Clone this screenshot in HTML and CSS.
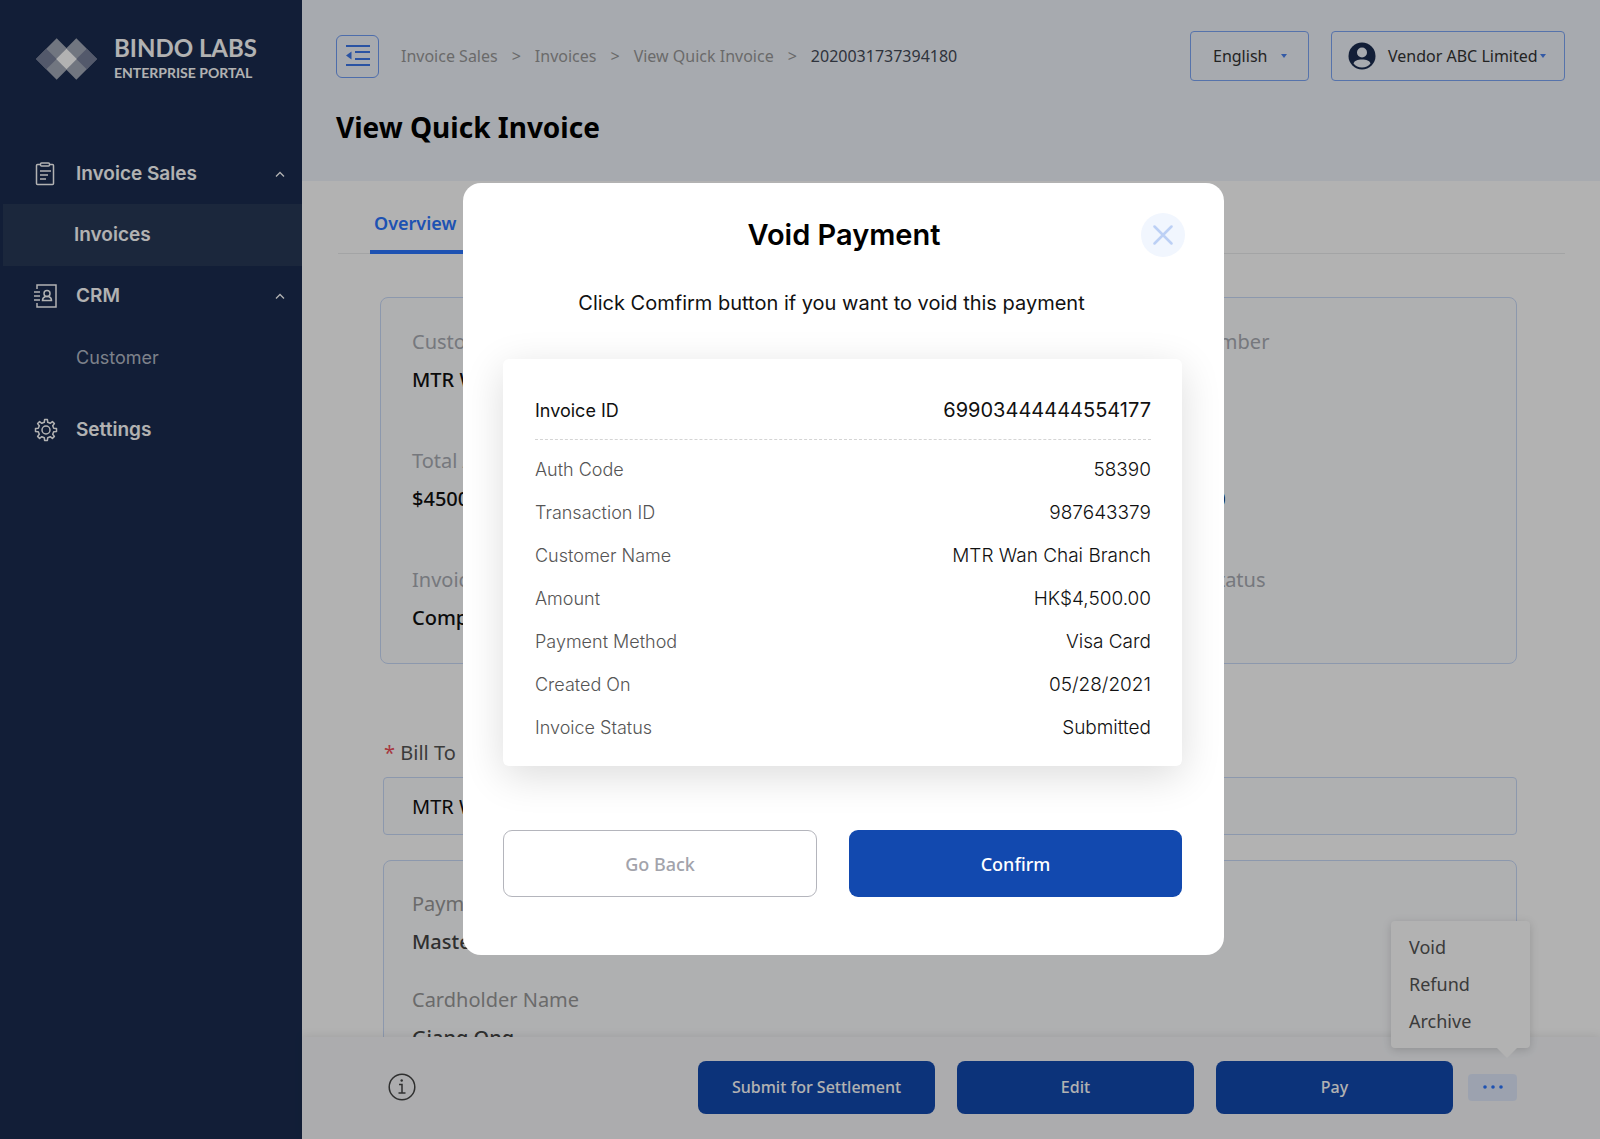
FILE: index.html
```html
<!DOCTYPE html>
<html lang="en">
<head>
<meta charset="utf-8">
<meta name="viewport" content="width=device-width, initial-scale=1">
<title>View Quick Invoice - Bindo Labs Enterprise Portal</title>
<link rel="stylesheet" href="styles.css">
</head>
<body>
<div class="app">
  <aside class="sidebar">
    <a class="brand" href="#">
      <svg class="brand-mark" width="61" height="42" viewBox="0 0 62 42" aria-hidden="true">
        <path d="M21 0 42 21 21 42 0 21z" fill="#a3aab8"/>
        <path d="M41 0 62 21 41 42 20 21z" fill="#a3aab8"/>
        <path d="M10.500 10.500 21 21 10.500 31.500 0 21z" fill="#78809a"/>
        <path d="M51.500 10.500 62 21 51.500 31.500 41 21z" fill="#78809a"/>
        <path d="M21 21 26 16 31 21 26 26zM31 21 36 16 41 21 36 26z" fill="#78809a"/>
        <path d="M31 10.500 41.500 21 31 31.500 20.500 21z" fill="#fff"/>
      </svg>
      <span class="brand-text"><span class="brand-name">BINDO LABS</span><span class="brand-sub">ENTERPRISE PORTAL</span></span>
    </a>
    <nav class="nav" aria-label="Main">
      <a class="nav-item" href="#">
        <svg class="nav-icon" width="24" height="24" viewBox="0 0 24 24" fill="none" stroke="currentColor" stroke-width="1.500" aria-hidden="true">
          <rect x="2.500" y="2.500" width="17" height="20" rx="1"/><rect x="6.500" y="1" width="9" height="3" rx="1" fill="#1a2c50"/><path d="M6 9h11M6 13h8M6 17h6"/>
        </svg>
        <span>Invoice Sales</span>
        <svg class="chevron" width="10" height="6" viewBox="0 0 10 6" fill="none" stroke="currentColor" stroke-width="1.300" aria-hidden="true"><path d="M1 5.500 5 1.500 9 5.500"/></svg>
      </a>
      <a class="nav-sub active" href="#" aria-current="page">Invoices</a>
      <a class="nav-item" href="#">
        <svg class="nav-icon" width="24" height="24" viewBox="0 0 24 24" fill="none" stroke="currentColor" stroke-width="1.500" aria-hidden="true">
          <path d="M3 5V1h19v22H3v-4M0 8h6M0 12h6M0 16h6"/><circle cx="13" cy="9.500" r="3"/><path d="M8.500 16.500c0-2 1.500-3.500 3-4h3c1.500.5 3 2 3 4z"/>
        </svg>
        <span>CRM</span>
        <svg class="chevron" width="10" height="6" viewBox="0 0 10 6" fill="none" stroke="currentColor" stroke-width="1.300" aria-hidden="true"><path d="M1 5.500 5 1.500 9 5.500"/></svg>
      </a>
      <a class="nav-sub" href="#">Customer</a>
      <a class="nav-item settings" href="#">
        <svg class="nav-icon" width="24" height="24" viewBox="0 0 24 24" fill="none" stroke="currentColor" stroke-width="1.500" stroke-linejoin="round" aria-hidden="true">
          <circle cx="12" cy="12" r="4"/>
          <path d="M10.300 4.300 10.600 1.500h2.800l.3 2.800 2.500 1 2.200-1.700 2 2-1.700 2.200 1 2.500 2.800.3v2.800l-2.800.3-1 2.500 1.700 2.200-2 2-2.200-1.700-2.500 1-.3 2.800h-2.800l-.3-2.800-2.500-1-2.200 1.700-2-2 1.700-2.200-1-2.500-2.800-.3v-2.800l2.800-.3 1-2.500-1.700-2.200 2-2 2.200 1.700z"/>
        </svg>
        <span>Settings</span>
      </a>
    </nav>
  </aside>

  <main class="main">
    <header class="topbar">
      <div class="topbar-row">
        <button class="toggle" type="button" aria-label="Collapse menu">
          <svg width="24" height="22" viewBox="0 0 24 22" fill="currentColor" aria-hidden="true"><path d="M0 0h24v2H0zM9 6h15v2H9zM9 13h15v2H9zM0 19h24v2H0zM0 10.500 5.500 6.500v8z"/></svg>
        </button>
        <nav class="crumbs" aria-label="Breadcrumb">
          <a href="#">Invoice Sales</a><span>&gt;</span><a href="#">Invoices</a><span>&gt;</span><a href="#">View Quick Invoice</a><span>&gt;</span><span class="current" aria-current="page">2020031737394180</span>
        </nav>
        <div class="topbar-actions">
          <div class="pill language">
            <select aria-label="Language"><option>English</option></select>
            <svg class="caret" width="6" height="4" viewBox="0 0 6 4" aria-hidden="true"><path d="M0 0h6L3 4z" fill="currentColor"/></svg>
          </div>
          <button class="pill account" type="button">
            <svg width="28" height="28" viewBox="0 0 28 28" aria-hidden="true"><circle cx="14" cy="14" r="13.500" fill="#1a2c50"/><circle cx="14" cy="10.500" r="5" fill="#f0f4fb"/><path d="M5.500 21.500c1-3 4-4 8.500-4s7.500 1 8.500 4c-2 2.500-5 4-8.500 4s-6.500-1.500-8.500-4z" fill="#f0f4fb"/></svg>
            <span>Vendor ABC Limited</span>
            <svg class="caret" width="6" height="4" viewBox="0 0 6 4" aria-hidden="true"><path d="M0 0h6L3 4z" fill="currentColor"/></svg>
          </button>
        </div>
      </div>
      <h1 class="page-title">View Quick Invoice</h1>
    </header>

    <div class="content">
      <nav class="tabs" aria-label="Sections"><a class="tab" href="#">Overview</a></nav>
      <div class="sections">
        <dl class="card summary">
          <div><dt>Customer Name</dt><dd>MTR Wan Chai Branch</dd></div>
          <div><dt>Customer ID</dt><dd>58390</dd></div>
          <div><dt>Invoice Number</dt><dd>87394180</dd></div>
          <div><dt>Total Amount</dt><dd>$4500.00</dd></div>
          <div><dt>Created On</dt><dd>05/28/2021</dd></div>
          <div><dt>Due Date</dt><dd>05/30/2020</dd></div>
          <div><dt>Invoice Status</dt><dd>Completed</dd></div>
          <div><dt>Currency</dt><dd>HKD</dd></div>
          <div><dt>Payment Status</dt><dd>Paid</dd></div>
        </dl>
        <div class="bill">
          <label class="bill-label" for="bill-to"><span class="required">*</span> Bill To</label>
          <input class="bill-input" id="bill-to" type="text" value="MTR Wan Chai Branch">
          <dl class="card payment">
            <div><dt>Payment Method</dt><dd>Mastercard</dd></div>
            <div><dt>Cardholder Name</dt><dd>Giang Ong</dd></div>
          </dl>
        </div>
      </div>
    </div>

    <footer class="actions">
      <button class="info" type="button" aria-label="Information">
        <svg width="28" height="28" viewBox="0 0 28 28" fill="none" stroke="currentColor" stroke-width="1.500" aria-hidden="true"><circle cx="14" cy="14" r="12.800"/><path d="M11 11.500h3v8.500M10.500 20h7"/><circle cx="13.700" cy="7.500" r="1.200" fill="currentColor" stroke="none"/></svg>
      </button>
      <button class="primary" type="button">Submit for Settlement</button>
      <button class="primary" type="button">Edit</button>
      <button class="primary" type="button">Pay</button>
      <div class="more-wrap">
        <button class="more" type="button" aria-label="More actions" aria-expanded="true">
          <svg width="20" height="4" viewBox="0 0 20 4" fill="currentColor" aria-hidden="true"><circle cx="2" cy="2" r="1.800"/><circle cx="10" cy="2" r="1.800"/><circle cx="18" cy="2" r="1.800"/></svg>
        </button>
        <div class="menu">
          <button type="button">Void</button>
          <button type="button">Refund</button>
          <button type="button">Archive</button>
        </div>
      </div>
    </footer>
  </main>
</div>

<div class="overlay">
  <section class="modal" role="dialog" aria-modal="true" aria-labelledby="dialog-title">
    <header class="modal-head">
      <h2 id="dialog-title">Void Payment</h2>
      <button class="close" type="button" aria-label="Close">
        <svg width="20" height="20" viewBox="0 0 20 20" fill="none" stroke="currentColor" stroke-width="2.500" stroke-linecap="round" aria-hidden="true"><path d="M1.500 1.500l17 17M18.500 1.500l-17 17"/></svg>
      </button>
    </header>
    <p class="modal-text">Click Comfirm button if you want to void this payment</p>
    <dl class="receipt">
      <div class="receipt-id"><dt>Invoice ID</dt><dd>69903444444554177</dd></div>
      <div><dt>Auth Code</dt><dd>58390</dd></div>
      <div><dt>Transaction ID</dt><dd>987643379</dd></div>
      <div><dt>Customer Name</dt><dd>MTR Wan Chai Branch</dd></div>
      <div><dt>Amount</dt><dd>HK$4,500.00</dd></div>
      <div><dt>Payment Method</dt><dd>Visa Card</dd></div>
      <div><dt>Created On</dt><dd>05/28/2021</dd></div>
      <div><dt>Invoice Status</dt><dd>Submitted</dd></div>
    </dl>
    <div class="modal-actions">
      <button class="back" type="button">Go Back</button>
      <button class="confirm" type="button">Confirm</button>
    </div>
  </section>
</div>
</body>
</html>
```
FILE: styles.css
```css
* { box-sizing: border-box; }

:root {
  --navy: #1a2c50;
  --primary: #1249af;
  --accent: #2b76ff;
  --line: #c9daf8;
  --sans: "Noto Sans", sans-serif;
  --ui: Inter, sans-serif;
}

body { margin: 0; font: 16px/24px var(--sans); color: #333; background: #fff; }
button, input, select { font: inherit; color: inherit; margin: 0; }
button { padding: 0; border: 0; background: none; cursor: pointer; }
a { color: inherit; text-decoration: none; }
h1, h2, p, dl, dd { margin: 0; }
svg { display: block; flex: none; }

.app { display: flex; height: 100vh; overflow: hidden; }

/* Sidebar */
.sidebar { flex: 0 0 302px; background: var(--navy); color: #fff; }
.brand { display: flex; align-items: center; gap: 17px; height: 84px; padding: 34px 0 0 36px; }
.brand-text { display: flex; flex-direction: column; font-family: Lato, sans-serif; font-weight: 700; }
.brand-name { font-size: 24px; line-height: 28px; }
.brand-sub { font-size: 14px; line-height: 22px; }
.nav { display: flex; flex-direction: column; padding-top: 60px; font: 600 19px/24px var(--ui); }
.nav-item { display: flex; align-items: center; gap: 17px; height: 60px; padding: 0 17px 0 34px; }
.nav-item .nav-icon { margin-right: 1px; }
.chevron { margin-left: auto; }
.nav-sub { display: flex; align-items: center; height: 64px; margin-left: 3px; padding-left: 73px; font-size: 18px; font-weight: 400; color: #b4bac6; }
.nav-sub.active { height: 62px; padding-left: 71px; background: #283857; font-size: 19px; font-weight: 600; color: #fff; }
.nav-item.settings { margin-top: 10px; }

/* Top bar */
.main { display: flex; flex: 1; flex-direction: column; min-width: 0; }
.topbar { flex: none; height: 181px; padding: 31px 35px 0 34px; background: #f0f4fb; }
.topbar-row { display: flex; align-items: center; }
.toggle { display: grid; place-items: center; width: 43px; height: 43px; border: 1px solid #6f9cf5; border-radius: 6px; color: #3d78ea; }
.crumbs { display: flex; gap: 14px; margin-left: 22px; color: #999; }
.current { color: #444a57; }
.topbar-actions { display: flex; gap: 22px; margin-left: auto; }
.pill { display: flex; align-items: center; height: 50px; border: 1px solid #7ba5f5; border-radius: 4px; color: #333; }
.caret { color: #4a82ee; }
.language { width: 119px; padding-left: 22px; }
.language select { width: 68px; padding: 0; border: 0; outline: 0; appearance: none; background: none; }
.account { width: 234px; padding-left: 16px; }
.account span { margin: 0 2px 0 12px; }
.page-title { margin-top: 27px; font-size: 28px; line-height: 38px; font-weight: 700; color: #000; }

/* Page content */
.content { flex: 1; min-height: 0; padding: 0 35px 0 36px; overflow: hidden; }
.tabs { display: flex; height: 73px; padding-left: 32px; border-bottom: 1px solid #eaebed; }
.tab { height: 73px; padding: 30px 12px 0 4px; border-bottom: 4px solid var(--accent); font-size: 18px; font-weight: 600; color: var(--accent); }
.sections { padding: 43px 48px 0 42px; }
.card { border: 1px solid var(--line); border-radius: 8px; background: #fbfcfe; font-size: 20px; line-height: 28px; }
.card dt { color: #a9acb4; }
.card dd { margin-top: 10px; font-weight: 500; color: #111; }
.summary { display: grid; grid-template-columns: repeat(3, 1fr); row-gap: 53px; padding: 30px 44px 31px 31px; }
.bill { padding: 75px 0 0 3px; }
.bill-label { display: block; padding-left: 1px; font-size: 20px; line-height: 28px; color: #555; }
.required { color: #f0505a; }
.bill-input { display: block; width: 100%; height: 58px; margin-top: 10px; padding: 0 28px; border: 1px solid var(--line); border-radius: 4px; background: #fbfcfe; font-size: 20px; color: #111; }
.payment { display: grid; row-gap: 30px; margin-top: 25px; padding: 29px 28px; }
.payment dt { color: #999; }
.payment dd { color: #444; }

/* Bottom action bar */
.actions { position: relative; display: flex; flex: none; align-items: center; gap: 22px; height: 102px; padding: 0 83px 2px 86px; background: #f6f7fa; box-shadow: 0 -2px 8px rgba(0, 0, 0, .08); }
.info { margin-right: auto; color: #444; }
.primary { width: 237px; height: 53px; border-radius: 8px; background: var(--primary); font-weight: 500; color: #fff; }
.more-wrap { position: relative; margin-left: -7px; }
.more { display: grid; place-items: center; width: 49px; height: 27px; border-radius: 4px; background: #e0e9fb; color: var(--accent); }
.menu { position: absolute; right: -13px; bottom: 53px; display: flex; flex-direction: column; width: 139px; padding: 8px 18px; border-radius: 4px; background: #fff; box-shadow: 0 2px 10px rgba(0, 0, 0, .16); font-size: 18px; line-height: 37px; color: #555; }
.menu button { text-align: left; }
.menu::after { content: ""; position: absolute; top: 100%; right: 13px; border: 10px solid transparent; border-top-color: #fff; border-bottom: 0; }

/* Dialog */
.overlay { position: fixed; inset: 0; display: flex; justify-content: center; align-items: center; padding: 0 0 1px 87px; background: rgba(0, 0, 0, .3); }
.modal { width: 761px; padding: 30px 42px 58px 40px; border-radius: 18px; background: #fff; font-family: var(--ui); color: #111; }
.modal-head { display: grid; grid-template-columns: 44px 1fr 44px; align-items: center; margin-right: -3px; }
.modal-head h2 { grid-column: 2; font-size: 29px; line-height: 36px; font-weight: 600; text-align: center; color: #000; }
.close { display: grid; place-items: center; width: 44px; height: 44px; border-radius: 50%; background: #f1f6fe; color: #bcd0f5; }
.modal-text { margin-top: 32px; padding-right: 22px; font-size: 20px; line-height: 28px; text-align: center; }
.receipt { margin-top: 42px; padding: 30px 31px 17px 32px; border-radius: 6px; background: #fff; box-shadow: 0 10px 40px rgba(0, 0, 0, .14); font-size: 19px; line-height: 43px; }
.receipt div { display: flex; justify-content: space-between; }
.receipt dt { font-size: 18px; color: #555; font-weight: 300; }
.receipt dd { font-weight: 300; }
.receipt .receipt-id { margin-bottom: 8px; padding-bottom: 7px; border-bottom: 1px dashed #d5d5d5; }
.receipt .receipt-id dt, .receipt .receipt-id dd { color: #111; font-weight: 400; }
.receipt .receipt-id dd { font-size: 20px; }
.modal-actions { display: flex; gap: 32px; margin-top: 64px; font: 500 18px/24px var(--sans); }
.back, .confirm { height: 67px; border-radius: 9px; }
.back { width: 314px; border: 1px solid #b4b5bc; color: #a2a3ab; }
.confirm { flex: 1; background: var(--primary); color: #fff; }
```
